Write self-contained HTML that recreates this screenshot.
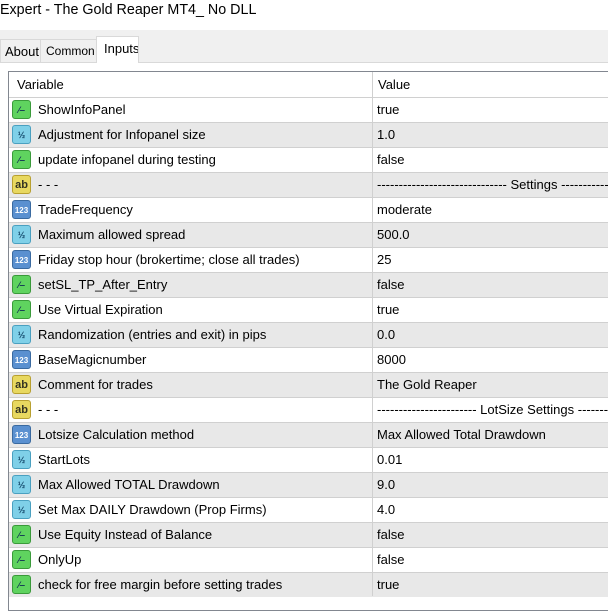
<!DOCTYPE html><html><head><style>
body{margin:0;width:608px;height:596px;overflow:hidden;background:#fff;font-family:"Liberation Sans",Arial,sans-serif;font-size:13px;color:#000;position:relative}
.t{position:absolute;left:0;top:0;width:608px;height:30px;background:#fff;font-size:14.3px;line-height:20px}
.strip{position:absolute;left:0;top:30px;width:608px;height:32px;background:#f0f0f0;border-bottom:1px solid #d9d9d9}
.tab{position:absolute;top:39px;height:23px;line-height:23px;background:#f0f0f0;border:1px solid #d9d9d9;border-bottom:none;padding:0 4px;box-sizing:border-box;white-space:nowrap;overflow:hidden}
.tbl{position:absolute;left:8px;top:71px;width:620px;height:540px;border:1px solid #828790;box-sizing:border-box}
.row{position:absolute;left:9px;width:610px;height:25px;border-top:1px solid #d0d0d0;box-sizing:border-box}
.row span{position:absolute;top:4px}
.v1{left:29px}.v2{left:368px}
.div{position:absolute;left:372px;top:72px;width:1px;height:524px;background:#d0d0d0}
.ic{position:absolute;left:3px;top:2px;width:19px;height:19px;border-radius:3px;font-size:9px;font-weight:bold;line-height:19px;text-align:center;box-sizing:border-box}
.b{background:#5fd35f;border:1px solid #3a9a3a;color:#135}
.h{background:#7fd0e8;border:1px solid #4aa0c0;color:#146}
.a{background:#e8d860;border:1px solid #b8a030;color:#332;font-size:11px}
.n{background:#5a90d0;border:1px solid #3a6aa0;color:#fff;font-size:8px}
</style></head><body>
<div class="t">Expert - The Gold Reaper MT4_ No DLL</div>
<div class="strip"></div>
<div class="tab" style="left:0;width:41px">About</div>
<div class="tab" style="left:40px;width:57px;padding-left:5px;font-size:12px">Common</div>
<div class="tab" style="left:96px;top:36px;height:27px;width:43px;background:#fff;line-height:24px;padding-left:7px;padding-right:0">Inputs</div>
<div class="tbl"></div>
<div class="row" style="top:72px;border-top:none"><span style="left:8px;top:5px">Variable</span><span style="left:369px;top:5px">Value</span></div>
<div id="rows"></div>
<div class="div"></div>
<script>
var d=[["b","ShowInfoPanel","true"],["h","Adjustment for Infopanel size","1.0"],["b","update infopanel during testing","false"],["a","- - -","------------------------------ Settings ---------------------"],["n","TradeFrequency","moderate"],["h","Maximum allowed spread","500.0"],["n","Friday stop hour (brokertime; close all trades)","25"],["b","setSL_TP_After_Entry","false"],["b","Use Virtual Expiration","true"],["h","Randomization (entries and exit) in pips","0.0"],["n","BaseMagicnumber","8000"],["a","Comment for trades","The Gold Reaper"],["a","- - -","----------------------- LotSize Settings ---------------"],["n","Lotsize Calculation method","Max Allowed Total Drawdown"],["h","StartLots","0.01"],["h","Max Allowed TOTAL Drawdown","9.0"],["h","Set Max DAILY Drawdown (Prop Firms)","4.0"],["b","Use Equity Instead of Balance","false"],["b","OnlyUp","false"],["b","check for free margin before setting trades","true"]];
var g={b:"⁄‒",h:"½",a:"ab",n:"123"},h="";
d.forEach(function(r,i){h+='<div class="row" style="top:'+(97+25*i)+'px;background:'+(i%2?'#e8e8e8':'#fff')+'"><div class="ic '+r[0]+'">'+g[r[0]]+'</div><span class="v1">'+r[1]+'</span><span class="v2">'+r[2]+'</span></div>'});
document.getElementById("rows").innerHTML=h;
</script>
</body></html>
